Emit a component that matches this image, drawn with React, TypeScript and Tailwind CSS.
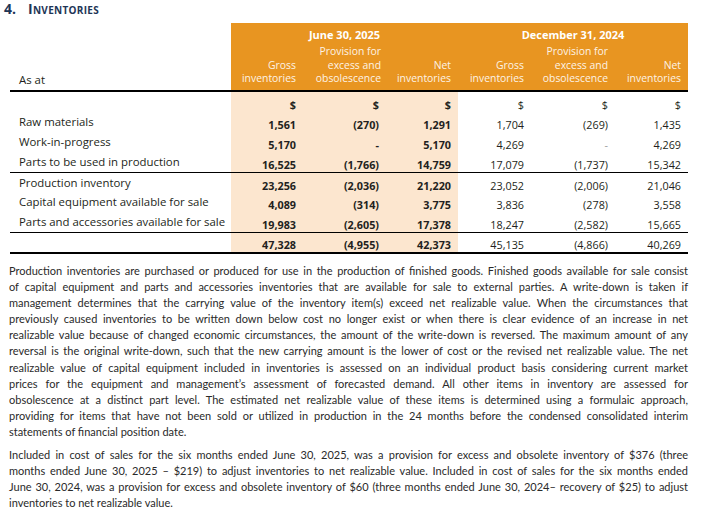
import React from 'react';

const cols = 'grid grid-cols-[221px_69px_81px_77px_70px_84px_76px]';
const subCols = 'grid grid-cols-[69px_81px_77px_70px_84px_76px]';
const colPad = ['pr-[4px]', 'pr-[2px]', 'pr-[7px]', 'pr-[4px]', 'pr-[4px]', 'pr-[7px]'];

type RowData = { label: string; values: string[]; h: string; pt: string };

const group1: RowData[] = [
  { label: 'Raw materials', values: ['1,561', '(270)', '1,291', '1,704', '(269)', '1,435'], h: 'h-[20px]', pt: 'pt-[3px]' },
  { label: 'Work-in-progress', values: ['5,170', '-', '5,170', '4,269', '-', '4,269'], h: 'h-[20px]', pt: 'pt-[3px]' },
  { label: 'Parts to be used in production', values: ['16,525', '(1,766)', '14,759', '17,079', '(1,737)', '15,342'], h: 'h-[17px]', pt: 'pt-[3px]' },
];

const group2: RowData[] = [
  { label: 'Production inventory', values: ['23,256', '(2,036)', '21,220', '23,052', '(2,006)', '21,046'], h: 'h-[19px]', pt: 'pt-[6px]' },
  { label: 'Capital equipment available for sale', values: ['4,089', '(314)', '3,775', '3,836', '(278)', '3,558'], h: 'h-[20px]', pt: 'pt-[6px]' },
  { label: 'Parts and accessories available for sale', values: ['19,983', '(2,605)', '17,378', '18,247', '(2,582)', '15,665'], h: 'h-[20px]', pt: 'pt-[6px]' },
];

const para1 = [
  'Production inventories are purchased or produced for use in the production of finished goods. Finished goods available for sale consist',
  'of capital equipment and parts and accessories inventories that are available for sale to external parties. A write-down is taken if',
  'management determines that the carrying value of the inventory item(s) exceed net realizable value. When the circumstances that',
  'previously caused inventories to be written down below cost no longer exist or when there is clear evidence of an increase in net',
  'realizable value because of changed economic circumstances, the amount of the write-down is reversed. The maximum amount of any',
  'reversal is the original write-down, such that the new carrying amount is the lower of cost or the revised net realizable value. The net',
  'realizable value of capital equipment included in inventories is assessed on an individual product basis considering current market',
  'prices for the equipment and management\u2019s assessment of forecasted demand. All other items in inventory are assessed for',
  'obsolescence at a distinct part level. The estimated net realizable value of these items is determined using a formulaic approach,',
  'providing for items that have not been sold or utilized in production in the 24 months before the condensed consolidated interim',
  'statements of financial position date.',
];

const para2 = [
  'Included in cost of sales for the six months ended June 30, 2025, was a provision for excess and obsolete inventory of $376 (three',
  'months ended June 30, 2025 \u2013 $219) to adjust inventories to net realizable value. Included in cost of sales for the six months ended',
  'June 30, 2024, was a provision for excess and obsolete inventory of $60 (three months ended June 30, 2024\u2013 recovery of $25) to adjust',
  'inventories to net realizable value.',
];

function Row({ label, values, h, pt }: RowData) {
  return (
    <div className={`${cols} ${h}`}>
      <div className={`pl-[9px] ${pt} leading-[8px] whitespace-nowrap text-[11.4px]`}>{label}</div>
      {values.map((v, i) => (
        <div
          key={i}
          className={`${pt} ${colPad[i]} text-right leading-[14px] ${i < 3 ? 'bg-[#fce6cf] font-bold' : ''} ${v === '-' && i >= 3 ? 'text-[#9a9a9a]' : ''}`}
        >
          {v}
        </div>
      ))}
    </div>
  );
}

function Paragraph({ lines }: { lines: string[] }) {
  return (
    <div>
      {lines.map((l, i) => (
        <div
          key={i}
          className={i < lines.length - 1 ? 'text-justify [text-align-last:justify]' : 'text-left'}
        >
          {l}
        </div>
      ))}
    </div>
  );
}

const App: React.FC = () => {
  return (
    <div className="w-[720px] h-[517px] bg-white text-[#231f20] font-['Lato','Liberation_Sans',sans-serif] text-[11px] overflow-hidden">
      <div className="h-[23px] pl-[4px] leading-[17px] text-[14px] font-bold text-[#1e3556] [font-variant:small-caps] font-['Open_Sans','Liberation_Sans',sans-serif]">
        4.<span className="ml-[12px] tracking-[0.3px]">Inventories</span>
      </div>

      <div className="ml-[10px] w-[678px] font-['Open_Sans','Liberation_Sans',sans-serif] text-[10.8px]">
        {/* header */}
        <div className="flex h-[67px]">
          <div className="w-[221px] flex items-end pl-[9px] pb-[3px] leading-[14px] text-[11.4px]">As at</div>
          <div className="w-[457px] bg-[#e89521] text-[#fdf3e6] text-[10.4px]">
            <div className="flex pt-[5px] h-[22px] leading-[14px] font-bold text-white text-[11px]">
              <div className="w-[227px] text-center">June 30, 2025</div>
              <div className="w-[230px] text-center">December 31, 2024</div>
            </div>
            <div className={`${subCols} leading-[13.5px]`}>
              {[0, 1].map((g) => (
                <React.Fragment key={g}>
                  <div className="pr-[4px] text-right pt-[13.5px] whitespace-nowrap">
                    Gross
                    <br />
                    inventories
                  </div>
                  <div className={`${g === 0 ? 'pr-[0px]' : 'pr-[4px]'} text-right whitespace-nowrap`}>
                    Provision for
                    <br />
                    excess and
                    <br />
                    obsolescence
                  </div>
                  <div className="pr-[7px] text-right pt-[13.5px] whitespace-nowrap">
                    Net
                    <br />
                    inventories
                  </div>
                </React.Fragment>
              ))}
            </div>
          </div>
        </div>

        <div className="h-[2px] bg-black" />

        <div className={`${cols} h-[23px]`}>
          <div />
          {['$', '$', '$', '$', '$', '$'].map((v, i) => (
            <div key={i} className={`pt-[6px] ${colPad[i]} text-right leading-[14px] ${i < 3 ? 'bg-[#fce6cf] font-bold' : ''}`}>
              {v}
            </div>
          ))}
        </div>

        {group1.map((r) => (
          <Row key={r.label} {...r} />
        ))}
        <div className="h-px bg-black" />
        {group2.map((r) => (
          <Row key={r.label} {...r} />
        ))}
        <div className="h-px bg-black" />
        <Row label="" values={['47,328', '(4,955)', '42,373', '45,135', '(4,866)', '40,269']} h="h-[19px]" pt="pt-[5px]" />
        <div className="h-[2px] bg-black" />
      </div>

      <div className="ml-[9px] w-[679px] mt-[9px] leading-[16.1px] text-[#2a2a2a]">
        <Paragraph lines={para1} />
        <div className="mt-[7px]">
          <Paragraph lines={para2} />
        </div>
      </div>
    </div>
  );
};

export default App;
